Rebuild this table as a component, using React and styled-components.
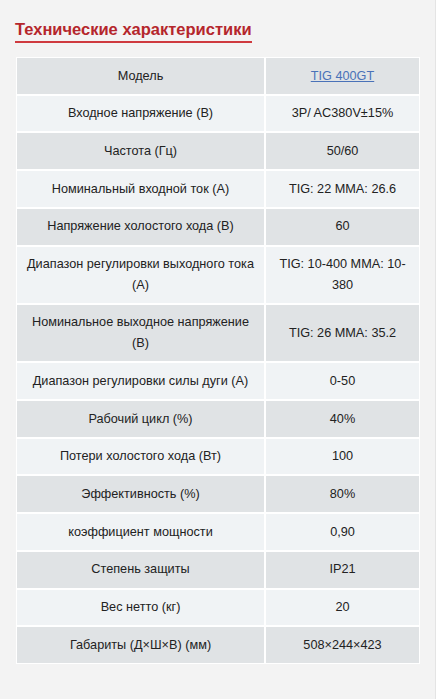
import React from "react";
import styled, { createGlobalStyle } from "styled-components";

const Global = createGlobalStyle`
  html, body { margin: 0; padding: 0; background: #f3f3f3; }
  body { font-family: "Liberation Sans", Arial, sans-serif; color: #222; }
`;

const Page = styled.div`
  width: 436px;
  min-height: 699px;
  box-sizing: border-box;
  padding: 19px 16px 30px 16px;
  border-right: 1px solid #e4e4e4;
`;

const Title = styled.h2`
  display: inline-block;
  margin: 0 0 14px -1px;
  padding: 0 0 2px 0;
  font-size: 16.5px;
  line-height: 20px;
  font-weight: bold;
  color: #b5262c;
  border-bottom: 2px solid #cf3a3f;
`;

const Table = styled.table`
  width: 404px;
  border-collapse: separate;
  border-spacing: 0;
  table-layout: fixed;
  font-size: 12.7px;
  line-height: 20.7px;
`;

const Row = styled.tr`
  background: ${(p) => (p.$shade ? "#e0e3e5" : "#f0f3f5")};
`;

const Cell = styled.td`
  border: 1px solid #ffffff;
  padding: 7.5px 6px;
  text-align: center;
  vertical-align: middle;
  color: #222;
  width: ${(p) => (p.$wide ? "235px" : "141px")};
`;

const Link = styled.a`
  color: #4a72b8;
  text-decoration: underline;
`;

const rows = [
  ["Модель", <Link href="#">TIG 400GT</Link>],
  ["Входное напряжение (В)", "3P/ AC380V±15%"],
  ["Частота (Гц)", "50/60"],
  ["Номинальный входной ток (А)", "TIG: 22 MMA: 26.6"],
  ["Напряжение холостого хода (В)", "60"],
  ["Диапазон регулировки выходного тока (А)", "TIG: 10-400 MMA: 10-380"],
  ["Номинальное выходное напряжение (В)", "TIG: 26 MMA: 35.2"],
  ["Диапазон регулировки силы дуги (А)", "0-50"],
  ["Рабочий цикл (%)", "40%"],
  ["Потери холостого хода (Вт)", "100"],
  ["Эффективность (%)", "80%"],
  ["коэффициент мощности", "0,90"],
  ["Степень защиты", "IP21"],
  ["Вес нетто (кг)", "20"],
  ["Габариты (Д×Ш×В) (мм)", "508×244×423"],
];

export default function App() {
  return (
    <Page>
      <Global />
      <Title>Технические характеристики</Title>
      <Table>
        <tbody>
          {rows.map(([k, v], i) => (
            <Row key={i} $shade={i % 2 === 0}>
              <Cell $wide>{k}</Cell>
              <Cell>{v}</Cell>
            </Row>
          ))}
        </tbody>
      </Table>
    </Page>
  );
}
